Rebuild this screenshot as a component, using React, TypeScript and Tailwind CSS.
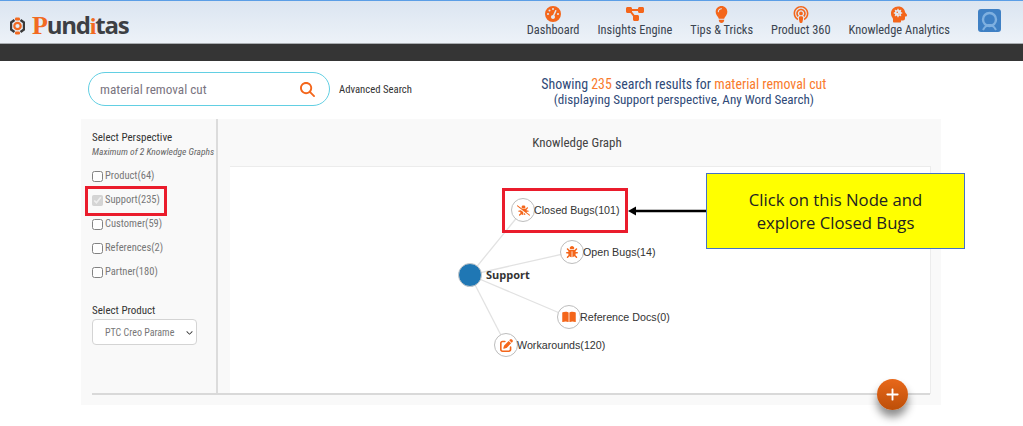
import { FaBookOpen, FaBug, FaBugSlash, FaMagnifyingGlass, FaPenToSquare, FaPodcast, FaLightbulb, FaGaugeHigh, FaDiagramProject, FaHeadSideVirus, FaPlus, FaChevronDown } from "react-icons/fa6";

const cond = { fontFamily: '"Liberation Sans Narrow", "Roboto Condensed", Roboto, sans-serif' };

const navItems = [
  { label: "Dashboard", icon: <FaGaugeHigh className="w-[18px] h-[16px]" /> },
  { label: "Insights Engine", icon: <FaDiagramProject className="w-[20px] h-[16px]" /> },
  { label: "Tips & Tricks", icon: <FaLightbulb className="w-[13px] h-[17px]" /> },
  { label: "Product 360", icon: <FaPodcast className="w-[16px] h-[17px]" /> },
  { label: "Knowledge Analytics", icon: <FaHeadSideVirus className="w-[16px] h-[17px]" /> },
];

const perspectives = [
  { label: "Product(64)", checked: false },
  { label: "Support(235)", checked: true },
  { label: "Customer(59)", checked: false },
  { label: "References(2)", checked: false },
  { label: "Partner(180)", checked: false },
];

const nodes = [
  { x: 293, y: 43, tx: 304, label: "Closed Bugs(101)", icon: <FaBugSlash className="w-[13px] h-[13px]" /> },
  { x: 342, y: 85, tx: 353, label: "Open Bugs(14)", icon: <FaBug className="w-[12px] h-[12px]" /> },
  { x: 339, y: 150, tx: 350, label: "Reference Docs(0)", icon: <FaBookOpen className="w-[14px] h-[12px]" /> },
  { x: 276, y: 178, tx: 287, label: "Workarounds(120)", icon: <FaPenToSquare className="w-[13px] h-[13px]" /> },
];

function Logo() {
  return (
    <div className="flex items-center gap-[7px]">
      <svg width="15" height="18" viewBox="0 0 15 18">
        <path d="M4.5 3 L1 5.5 V12.5 L4.5 15" fill="none" stroke="#3a3a3a" strokeWidth="2.4" />
        <path d="M10.5 3 L14 5.5 V12.5 L10.5 15" fill="none" stroke="#3a3a3a" strokeWidth="2.4" />
        <circle cx="7.5" cy="9" r="3.2" fill="none" stroke="#f26a21" strokeWidth="2.2" />
        <rect x="5" y="0.5" width="5" height="3" rx="1.2" fill="#f26a21" />
        <rect x="5" y="14.5" width="5" height="3" rx="1.2" fill="#f26a21" />
      </svg>
      <div className="text-[#3d3f44] text-[24px] font-bold leading-none tracking-[-1.2px]" style={{ fontFamily: '"Open Sans", sans-serif' }}>
        <span className="text-[#f26a21] text-[26px] font-bold" style={{ fontFamily: '"Liberation Serif", serif' }}>P</span>und<span className="text-[#f26a21] font-bold" style={{ fontFamily: '"Liberation Serif", serif' }}>i</span>tas
      </div>
    </div>
  );
}

function Header() {
  return (
    <header>
      <div className="h-[44px] border-t border-t-[#5b9ee6] border-b border-b-[#a9adb1] bg-gradient-to-b from-[#dbe5f1] to-[#edf2f8] flex items-start justify-between pl-[10px] pr-[22px]">
        <div className="pt-[12px]"><Logo /></div>
        <div className="flex items-start">
          <nav className="flex gap-[18px] pt-[4px] text-[#3b4450] text-[12.4px]" style={cond}>
            {navItems.map((n) => (
              <div key={n.label} className="flex flex-col items-center">
                <div className="h-[18px] flex items-center text-[#f4661b]">{n.icon}</div>
                <div className="leading-[16px] mt-[-1px] whitespace-nowrap">{n.label}</div>
              </div>
            ))}
          </nav>
          <div className="ml-[28px] mt-[8px] w-[23px] h-[23px] rounded-[3px] bg-[#3f80c4] flex justify-center items-center overflow-hidden">
            <svg width="23" height="23" viewBox="0 0 23 23">
              <circle cx="11.5" cy="10.5" r="6.5" fill="none" stroke="#7fb0e0" strokeWidth="2.4" />
              <path d="M5 21 C7 17 9 17 10 16 H13 C14 17 16 17 18 21" fill="none" stroke="#7fb0e0" strokeWidth="2" />
            </svg>
          </div>
        </div>
      </div>
      <div className="h-[17px] bg-[#353535]" />
    </header>
  );
}

function SearchRow() {
  return (
    <div className="h-[58px] flex items-start pl-[88px]" style={cond}>
      <div className="mt-[11px] w-[242px] h-[34px] rounded-[17px] border border-[#62cfe3] flex items-center justify-between pl-[11px] pr-[14px]">
        <span className="text-[#7a7480] text-[13.2px] whitespace-nowrap pt-[2px]">material removal cut</span>
        <FaMagnifyingGlass className="w-[15px] h-[15px] text-[#f4661b]" />
      </div>
      <div className="ml-[9px] mt-[22px] text-[#333] text-[10.7px] leading-[14px] whitespace-nowrap">Advanced Search</div>
      <div className="ml-[129px] mt-[16px] w-[286px] text-center text-[#2f4a78] text-[13.9px] leading-[15px] whitespace-nowrap">
        <div>Showing <span className="text-[#f97b2c]">235</span> search results for <span className="text-[#f97b2c]">material removal cut</span></div>
        <div className="text-[13.1px]">(displaying Support perspective, Any Word Search)</div>
      </div>
    </div>
  );
}

function Sidebar() {
  return (
    <aside className="w-[137px] h-[275px] border-r-2 border-r-[#dcdcdc] pl-[11px] pt-[12px] shrink-0" style={cond}>
      <div className="text-[#333] text-[11px] leading-[14px]">Select Perspective</div>
      <div className="text-[#666] text-[9.5px] italic leading-[12px] mt-[1px] whitespace-nowrap">Maximum of 2 Knowledge Graphs</div>
      <div className="mt-[11px] flex flex-col gap-[10px]">
        {perspectives.map((p) => (
          <label key={p.label} className="flex items-center h-[14px] text-[#777] text-[10.5px] leading-[14px] whitespace-nowrap">
            <input type="checkbox" defaultChecked={p.checked} disabled={p.checked} className="w-[11px] h-[11px] m-0 mr-[2px] shrink-0 opacity-90" />
            {p.label}
          </label>
        ))}
      </div>
      <div className="mt-[25px] text-[#333] text-[11px] leading-[14px]">Select Product</div>
      <div className="mt-[1px] w-[105px] h-[26px] bg-white border border-[#d4d4d4] rounded-[4px] flex items-center justify-between pl-[12px] pr-[3px] text-[#777] text-[10px] whitespace-nowrap">
        <span>PTC Creo Parame</span>
        <FaChevronDown className="w-[7px] h-[7px] text-[#333]" />
      </div>
    </aside>
  );
}

function Graph() {
  const cx = 240, cy = 108;
  return (
    <div className="ml-[12px] mr-[10px] h-[228px] bg-white border-t border-r border-[#ececec] relative" style={{ fontFamily: '"Liberation Sans", sans-serif' }}>
      <svg className="absolute left-0 top-0" width="700" height="227">
        {nodes.map((n) => (
          <line key={n.label} x1={cx} y1={cy} x2={n.x} y2={n.y} stroke="#e2e2e2" strokeWidth="1.3" />
        ))}
      </svg>
      <div className="absolute left-[228px] top-[96px] w-[24px] h-[24px] rounded-full bg-[#1f77b4] border border-[#c9c9c9]" />
      <div className="absolute left-[256px] top-[101px] text-[#333] text-[11px] font-bold leading-[14px]" style={{ fontFamily: '"Open Sans", sans-serif' }}>Support</div>
      {nodes.map((n) => (
        <div key={n.label}>
          <div className="absolute w-[24px] h-[24px] rounded-full bg-white border border-[#bdbdbd] flex items-center justify-center text-[#f4661b]" style={{ left: n.x - 12, top: n.y - 12 }}>
            {n.icon}
          </div>
          <div className="absolute text-[#333] text-[10.7px] leading-[14px] whitespace-nowrap" style={{ left: n.tx, top: n.y - 7 }}>{n.label}</div>
        </div>
      ))}
    </div>
  );
}

export default function App() {
  return (
    <div className="w-[1023px] h-[426px] bg-white overflow-hidden relative">
      <Header />
      <SearchRow />
      <main className="ml-[81px] w-[860px] h-[286px] bg-[#f9f9f9] flex">
        <Sidebar />
        <div className="flex-1 flex flex-col">
          <div className="h-[47px] pt-[16px] text-center text-[#444] text-[13px] leading-[16px] pr-[5px]" style={cond}>Knowledge Graph</div>
          <Graph />
        </div>
      </main>

      {/* divider along the bottom of the graph */}
      <div className="absolute left-[92px] top-[393px] w-[838px] h-[2px] bg-[#d9d9d9]" />

      {/* annotations laid over the page */}
      <div className="absolute left-[85px] top-[186px] w-[82px] h-[30px] border-[3px] border-[#ea1c2c]" />
      <div className="absolute left-[502px] top-[188px] w-[126px] h-[45px] border-[3px] border-[#ea1c2c]" />
      <div className="absolute left-[628px] top-[205px]">
        <svg width="80" height="12" viewBox="0 0 80 12">
          <path d="M0 6 L8 1.5 V10.5 Z" fill="#000" />
          <line x1="6" y1="6" x2="80" y2="6" stroke="#000" strokeWidth="2.5" />
        </svg>
      </div>
      <div className="absolute left-[706px] top-[173px] w-[259px] h-[76px] bg-[#ffff00] border border-[#4472c4] flex flex-col justify-center items-center text-[#222] text-[16.7px] leading-[23px] whitespace-nowrap" style={{ fontFamily: '"Open Sans", sans-serif' }}>
        <div>Click on this Node and</div>
        <div>explore Closed Bugs</div>
      </div>
      <div className="absolute left-[877px] top-[379px] w-[31px] h-[31px] rounded-full bg-gradient-to-b from-[#e8681a] to-[#bd4f08] flex items-center justify-center shadow-[0_7px_8px_rgba(0,0,0,0.45)]">
        <FaPlus className="w-[15px] h-[15px] text-white" />
      </div>
    </div>
  );
}
